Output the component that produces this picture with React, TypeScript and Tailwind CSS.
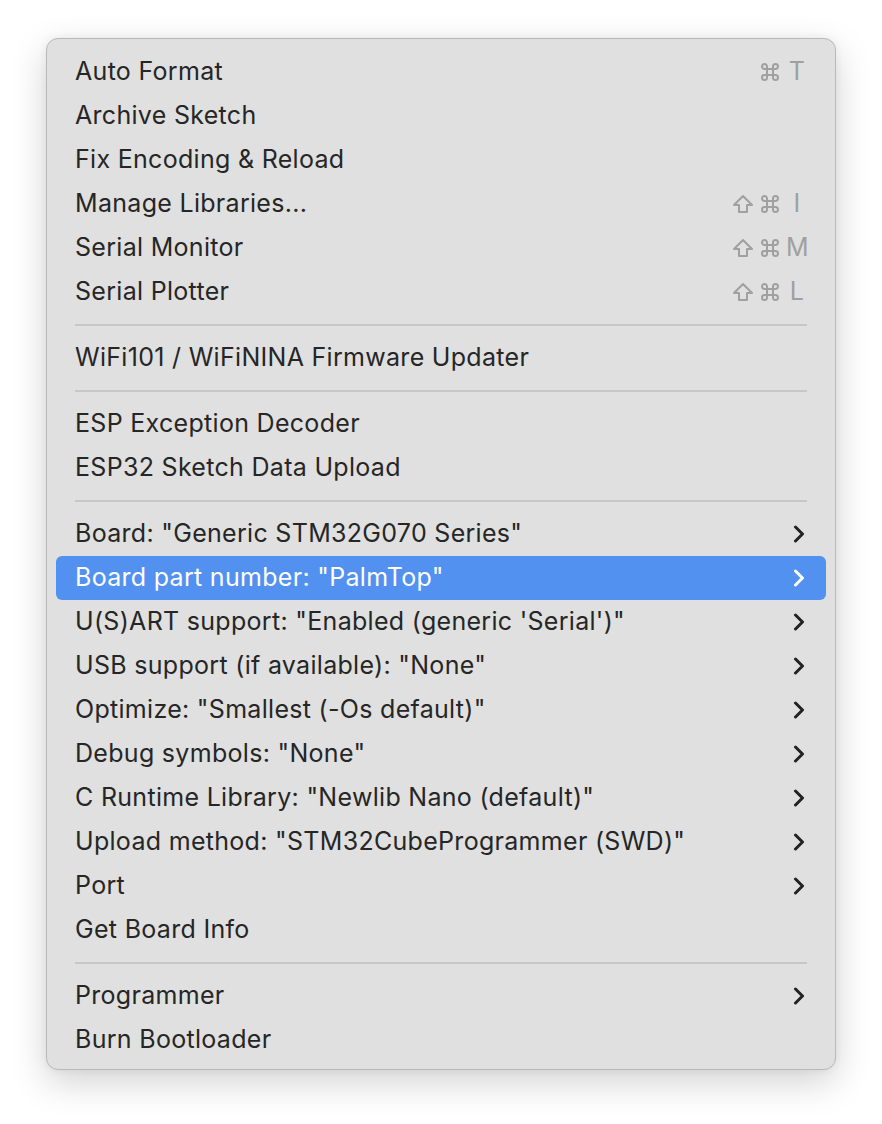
import React from 'react';

type Entry =
    | { kind: 'item'; label: string; keys?: string[]; keyChar?: string; sub?: boolean; active?: boolean }
    | { kind: 'sep' };

const entries: Entry[] = [
    { kind: 'item', label: 'Auto Format', keys: ['cmd'], keyChar: 'T' },
    { kind: 'item', label: 'Archive Sketch' },
    { kind: 'item', label: 'Fix Encoding & Reload' },
    { kind: 'item', label: 'Manage Libraries...', keys: ['shift', 'cmd'], keyChar: 'I' },
    { kind: 'item', label: 'Serial Monitor', keys: ['shift', 'cmd'], keyChar: 'M' },
    { kind: 'item', label: 'Serial Plotter', keys: ['shift', 'cmd'], keyChar: 'L' },
    { kind: 'sep' },
    { kind: 'item', label: 'WiFi101 / WiFiNINA Firmware Updater' },
    { kind: 'sep' },
    { kind: 'item', label: 'ESP Exception Decoder' },
    { kind: 'item', label: 'ESP32 Sketch Data Upload' },
    { kind: 'sep' },
    { kind: 'item', label: 'Board: "Generic STM32G070 Series"', sub: true },
    { kind: 'item', label: 'Board part number: "PalmTop"', sub: true, active: true },
    { kind: 'item', label: 'U(S)ART support: "Enabled (generic \'Serial\')"', sub: true },
    { kind: 'item', label: 'USB support (if available): "None"', sub: true },
    { kind: 'item', label: 'Optimize: "Smallest (-Os default)"', sub: true },
    { kind: 'item', label: 'Debug symbols: "None"', sub: true },
    { kind: 'item', label: 'C Runtime Library: "Newlib Nano (default)"', sub: true },
    { kind: 'item', label: 'Upload method: "STM32CubeProgrammer (SWD)"', sub: true },
    { kind: 'item', label: 'Port', sub: true },
    { kind: 'item', label: 'Get Board Info' },
    { kind: 'sep' },
    { kind: 'item', label: 'Programmer', sub: true },
    { kind: 'item', label: 'Burn Bootloader' },
];

const ShiftIcon = () => (
    <svg width="22" height="20" viewBox="0 0 22 20" fill="none" stroke="currentColor" strokeWidth="2" strokeLinejoin="round">
        <path d="M11 2 L20 11 H15 V18 H7 V11 H2 Z" />
    </svg>
);

const CmdIcon = () => (
    <svg width="20" height="20" viewBox="0 0 20 20" fill="none" stroke="currentColor" strokeWidth="2">
        <path d="M7 7 V4.5 A2.5 2.5 0 1 0 4.5 7 H15.5 A2.5 2.5 0 1 0 13 4.5 V15.5 A2.5 2.5 0 1 0 15.5 13 H4.5 A2.5 2.5 0 1 0 7 15.5 Z" />
    </svg>
);

const Chevron = ({ light }: { light?: boolean }) => (
    <svg width="12" height="18" viewBox="0 0 12 18" fill="none" stroke={light ? '#ffffff' : '#222222'} strokeWidth="3" strokeLinecap="round" strokeLinejoin="round">
        <path d="M2.5 2 L9.5 9 L2.5 16" />
    </svg>
);

const App: React.FC = () => {
    return (
        <div className="w-[882px] h-[1124px] bg-white pl-[46px] pt-[38px]" style={{ fontFamily: 'Inter, "Liberation Sans", sans-serif' }}>
            <div className="w-[790px] h-[1032px] rounded-[12px] bg-[#dfe0df] border border-[#b9b9b9] shadow-[0_12px_36px_rgba(0,0,0,0.18),0_0_8px_rgba(0,0,0,0.06)] pt-[11px] px-[9px] flex flex-col">
                {entries.map((e, i) =>
                    e.kind === 'sep' ? (
                        <div key={i} className="h-[22px] flex items-center px-[19px]">
                            <div className="h-[2px] w-full bg-[#c6c7c6]" />
                        </div>
                    ) : (
                        <div
                            key={i}
                            className={`h-[44px] rounded-[6px] flex items-center pl-[19px] pr-[18px] text-[25px] tracking-[0.3px] ${e.active ? 'bg-[#5291f0] text-white' : 'text-[#262626]'}`}
                        >
                            <span className="flex-1">{e.label}</span>
                            {e.keys && (
                                <span className="flex items-center gap-[6px] text-[#a0a0a0]">
                                    {e.keys.map((k) => (k === 'shift' ? <ShiftIcon key={k} /> : <CmdIcon key={k} />))}
                                    <span className="w-[22px] text-center">{e.keyChar}</span>
                                </span>
                            )}
                            {e.sub && (
                                <span className="mr-[3px]">
                                    <Chevron light={e.active} />
                                </span>
                            )}
                        </div>
                    )
                )}
            </div>
        </div>
    );
};

export default App;
